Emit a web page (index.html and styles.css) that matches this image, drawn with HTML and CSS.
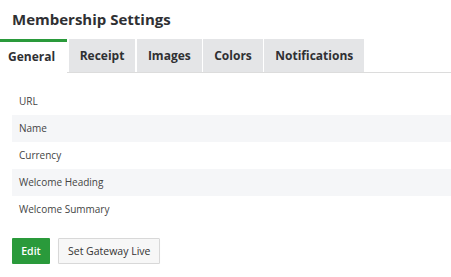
FILE: index.html
```html
<!DOCTYPE html>
<html lang="en">
<head>
    <meta charset="UTF-8" />
    <title>Membership Settings</title>
    <link rel="stylesheet" href="styles.css">
</head>
<body>
    <h1 class="page-title">Membership Settings</h1>

    <nav class="tabs">
        <a class="tab active" href="#">General</a>
        <a class="tab" href="#">Receipt</a>
        <a class="tab" href="#">Images</a>
        <a class="tab" href="#">Colors</a>
        <a class="tab" href="#">Notifications</a>
    </nav>

    <section class="settings">
        <div class="setting-row">URL</div>
        <div class="setting-row">Name</div>
        <div class="setting-row">Currency</div>
        <div class="setting-row">Welcome Heading</div>
        <div class="setting-row">Welcome Summary</div>
    </section>

    <div class="actions">
        <button class="btn btn-primary">Edit</button>
        <button class="btn btn-default">Set Gateway Live</button>
    </div>
</body>
</html>
```

FILE: styles.css
```css
:root {
    --green: #2a9a3b;
    --text-dark: #2f3033;
    --tab-bg: #e4e5e7;
    --stripe: #f5f6f8;
}
body {
    font-family: 'Open Sans', sans-serif;
    color: var(--text-dark);
    background: #fff;
    margin: 0;
}
.page-title {
    font-size: 15px;
    font-weight: 700;
    margin: 0;
    padding: 9px 12px 0;
    height: 30px;
    line-height: 20px;
}
.tabs {
    display: flex;
    gap: 1.5px;
    border-bottom: 1px solid #dcdcdc;
    height: 33px;
}
.tab {
    display: flex;
    align-items: center;
    padding: 0 11px;
    background: var(--tab-bg);
    color: var(--text-dark);
    font-size: 12px;
    font-weight: 700;
    text-decoration: none;
}
.tab.active {
    background: #fff;
    border-top: 3px solid var(--green);
    padding: 0 12px 3px 8px;
    margin-bottom: -1px;
}
.settings {
    padding: 15px 0 0 12px;
}
.setting-row {
    height: 27px;
    line-height: 27px;
    padding-left: 7px;
    font-size: 10px;
    color: #444;
}
.setting-row:nth-child(even) { background: var(--stripe); }
.actions {
    display: flex;
    gap: 8px;
    padding: 15px 12px 0;
}
.btn {
    font-family: 'Open Sans', sans-serif;
    font-size: 10.5px;
    height: 26px;
    padding: 0 9px;
    border-radius: 1px;
    white-space: nowrap;
    cursor: pointer;
}
.btn-primary {
    background: var(--green);
    color: #fff;
    border: none;
    font-weight: 600;
    width: 38px;
}
.btn-default {
    background: #f7f7f7;
    color: #333;
    border: 1px solid #d8d8d8;
    box-shadow: 0 1px 1px rgba(0,0,0,0.05);
    width: 102px;
}
```
